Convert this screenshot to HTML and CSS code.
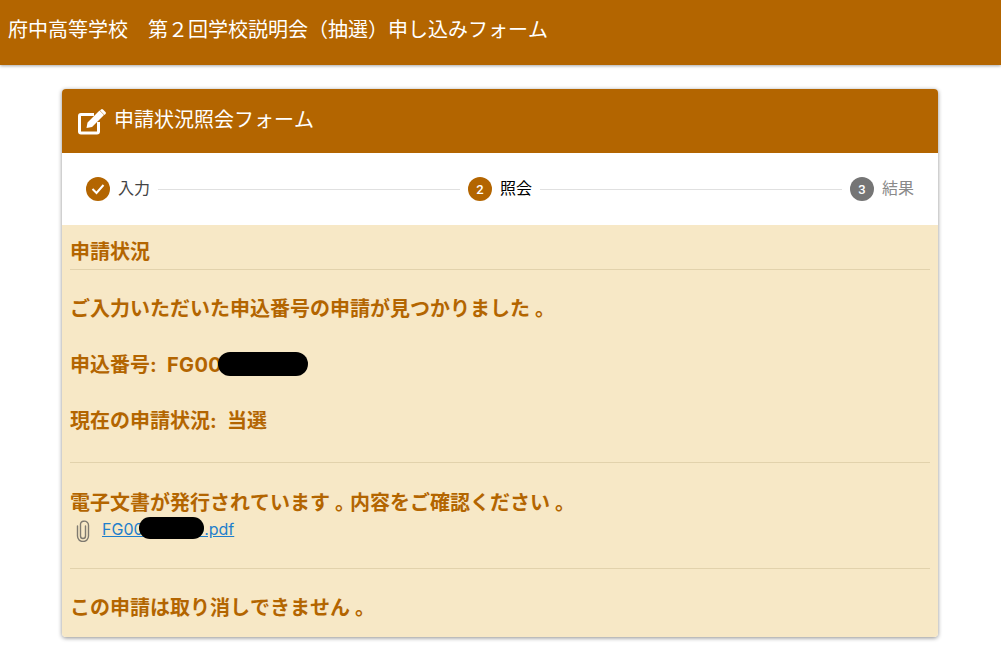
FILE: index.html
```html
<!DOCTYPE html>
<html lang="ja">
<head>
<meta charset="utf-8">
<title>申請状況照会フォーム</title>
<link rel="stylesheet" href="styles.css">
</head>
<body>
<header class="topbar"><h1 class="topbar-title">府中高等学校　第２回学校説明会（抽選）申し込みフォーム</h1></header>
<main class="card">
  <div class="card-head">
    <svg class="edit-icon" viewBox="0 0 28 26" aria-hidden="true"><path fill="none" stroke="#fff" stroke-width="3" stroke-linejoin="round" d="M16 5.500H3a1.500 1.500 0 0 0-1.500 1.500v15.500a1.500 1.500 0 0 0 1.500 1.500h16a1.500 1.500 0 0 0 1.500-1.500V13"/><path fill="#fff" d="M21.500 1.500l4.500 4.500-12 12-5.500 1 1-5.500zM23 0.500a1.500 1.500 0 0 1 2 0l2.500 2.500a1.500 1.500 0 0 1 0 2l-1 1-4.500-4.500z"/></svg>
    <h2 class="card-title">申請状況照会フォーム</h2>
  </div>
  <div class="stepper">
    <div class="step"><span class="badge badge-on"><svg class="check" viewBox="0 0 14 12" aria-hidden="true"><path fill="none" stroke="#fff" stroke-width="2" d="M1.500 6l4 4 7-8"/></svg></span><span class="step-label done">入力</span></div>
    <div class="line"></div>
    <div class="step"><span class="badge badge-on">2</span><span class="step-label now">照会</span></div>
    <div class="line"></div>
    <div class="step"><span class="badge badge-off">3</span><span class="step-label todo">結果</span></div>
  </div>
  <div class="content">
    <div class="section-title">申請状況</div>
    <p class="msg msg-found">ご入力いただいた申込番号の申請が見つかりました<span class="stop">。</span></p>
    <p class="msg msg-no">申込番号<span class="latin">: <span class="redact-wrap">FG00<span class="blob blob-no"></span></span></span></p>
    <p class="msg msg-status">現在の申請状況<span class="latin">: </span>当選</p>
    <hr class="rule rule-a">
    <p class="msg msg-doc">電子文書が発行されています<span class="stop">。</span>内容をご確認ください<span class="stop">。</span></p>
    <div class="file">
      <svg class="clip" viewBox="0 0 14 22" aria-hidden="true"><path fill="none" stroke="#7f7a70" stroke-width="1.400" stroke-linecap="round" d="M9.500 6v10a2.500 2.500 0 0 1-5 0V4.500a3 3 0 0 1 3-3.300h.5a4 4 0 0 1 4.500 4V16a5.500 5.500 0 0 1-11 0V6"/></svg>
      <a class="file-link" href="#"><span class="redact-wrap">FG00<span class="blob blob-file"></span></span>000000.pdf</a>
    </div>
    <hr class="rule rule-b">
    <p class="msg msg-cancel">この申請は取り消しできません<span class="stop">。</span></p>
  </div>
</main>
</body>
</html>
```
FILE: styles.css
```css
* { box-sizing: border-box; }
html, body { margin: 0; padding: 0; }
body {
  height: 663px;
  overflow: hidden;
  background: #fff;
  font-family: "Noto Sans CJK JP", "Noto Sans", sans-serif;
  font-kerning: none;
  color: #b36500;
}
.topbar {
  height: 65px;
  background: #b36500;
  box-shadow: 0 1px 3px rgba(0,0,0,.35);
  padding: 15px 8px 0;
}
.topbar-title {
  margin: 0;
  font-size: 20px;
  line-height: 28px;
  font-weight: 400;
  color: #fff;
}
.card {
  width: 876px;
  margin: 24px 0 0 62px;
  border-radius: 4px;
  overflow: hidden;
  box-shadow: 0 1px 4px rgba(0,0,0,.45);
  background: #fff;
}
.card-head {
  height: 64px;
  background: #b36500;
  display: flex;
  align-items: center;
  padding: 0 16px 4px;
  gap: 8px;
}
.edit-icon { width: 28px; height: 26px; flex: none; margin-top: 5px; }
.card-title { margin: 0; font-size: 20px; line-height: 28px; font-weight: 400; color: #fff; }
.stepper {
  height: 72px;
  display: flex;
  align-items: center;
  padding: 0 24px;
  gap: 8px;
}
.step { display: flex; align-items: center; gap: 8px; }
.badge {
  width: 24px;
  height: 24px;
  border-radius: 50%;
  display: flex;
  align-items: center;
  justify-content: center;
  color: #fff;
  font-size: 13px;
  font-weight: 500;
  font-family: Roboto, sans-serif;
}
.badge-on { background: #b36500; }
.badge-off { background: #757575; }
.check { width: 14px; height: 12px; }
.step-label { font-size: 16px; line-height: 24px; position: relative; top: -2px; }
.done { color: #444; }
.now { color: #000; }
.todo { color: #8a8a8a; }
.line { flex: 1; height: 1px; background: #e0e0e0; }
.content {
  background: #f7e8c6;
  height: 412px;
  padding: 12px 8px 0;
  font-weight: 700;
}
.section-title {
  font-size: 20px;
  line-height: 28px;
  padding-bottom: 4px;
  border-bottom: 1px solid #e2d2ac;
}
.msg { margin: 0; font-size: 20px; line-height: 28px; }
.msg-found { margin-top: 24px; }
.msg-no { margin-top: 28px; }
.msg-status { margin-top: 28px; }
.stop { margin-left: 5px; letter-spacing: -5px; }
.latin { font-family: Inter, sans-serif; line-height: 1; letter-spacing: .300px; word-spacing: 5px; }
.rule { border: 0; height: 1px; background: #e2d2ac; margin: 0; }
.rule-a { margin-top: 28px; }
.msg-doc { margin-top: 25px; }
.file { display: flex; align-items: center; gap: 12px; margin: 0 0 0 6px; height: 26px; font-weight: 400; }
.clip { width: 14px; height: 22px; flex: none; margin-top: 4px; }
.file-link { font-size: 16px; line-height: 24px; color: #1f7fcc; font-family: Inter, sans-serif; }
.redact-wrap { position: relative; }
.blob { position: absolute; background: #000; border-radius: 12px; }
.blob-no { left: 51px; top: -1px; width: 90px; height: 24px; }
.blob-file { left: 37px; top: -2px; width: 65px; height: 22px; }
.rule-b { margin-top: 26px; }
.msg-cancel { margin-top: 24px; }
```
